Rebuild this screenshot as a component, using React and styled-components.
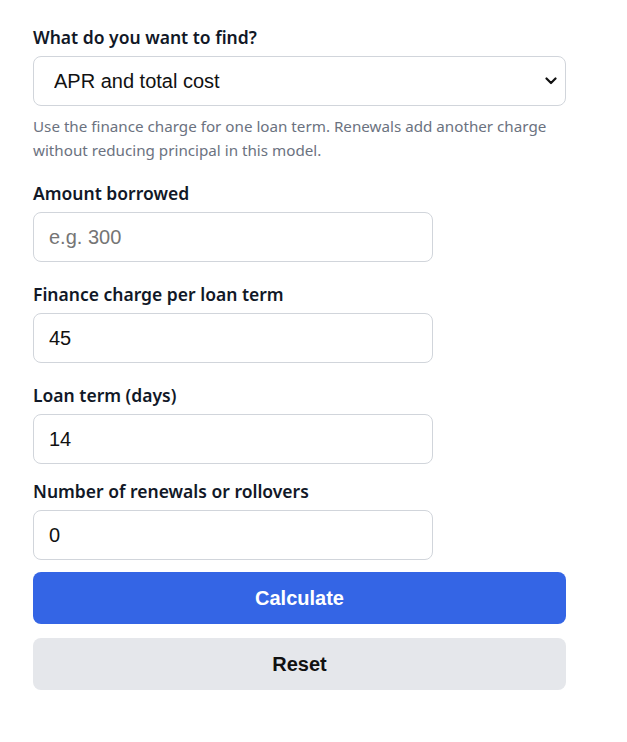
import React from 'react';
import styled, { createGlobalStyle } from 'styled-components';

const GlobalStyle = createGlobalStyle`
  body {
    margin: 0;
    background: #ffffff;
    font-family: "Noto Sans", "Open Sans", sans-serif;
    color: #111827;
  }
`;

const Form = styled.form`
  width: 533px;
  padding: 25px 0 0 33px;
  display: flex;
  flex-direction: column;
`;

const Field = styled.div`
  display: flex;
  flex-direction: column;
  margin-bottom: ${props => props.$gap || 20}px;
`;

const Label = styled.label`
  font-size: 17.5px;
  font-weight: 600;
  line-height: 24px;
  margin-bottom: 7px;
  color: #111827;
`;

const SelectWrap = styled.div`
  position: relative;
  width: 100%;
`;

const Select = styled.select`
  appearance: none;
  width: 100%;
  height: 50px;
  box-sizing: border-box;
  border: 1px solid #d1d5db;
  border-radius: 8px;
  background: #fff;
  padding: 0 40px 0 20px;
  font-family: "Liberation Sans", Arial, sans-serif;
  font-size: 20px;
  color: #111;
`;

const Chevron = styled.svg`
  position: absolute;
  right: 9px;
  top: 21px;
  pointer-events: none;
`;

const Help = styled.p`
  margin: 8px 0 0;
  font-size: 15.2px;
  line-height: 24px;
  color: #6b7280;
`;

const Input = styled.input`
  width: ${props => props.$width || 400}px;
  height: 50px;
  box-sizing: border-box;
  border: 1px solid #d1d5db;
  border-radius: 8px;
  padding: 0 15px;
  font-family: "Liberation Sans", Arial, sans-serif;
  font-size: 20px;
  color: #111;
  background: #fff;
  &::placeholder {
    color: #757575;
  }
`;

const Button = styled.button`
  width: 100%;
  height: 52px;
  border: none;
  border-radius: 8px;
  font-family: "Liberation Sans", Arial, sans-serif;
  font-size: 20px;
  font-weight: 700;
  cursor: pointer;
  background: ${props => (props.$kind === 'primary' ? '#3465e5' : '#e5e7eb')};
  color: ${props => (props.$kind === 'primary' ? '#ffffff' : '#111111')};
  margin-bottom: 14px;
`;

const App = () => {
  return (
    <>
      <GlobalStyle />
      <Form onSubmit={e => e.preventDefault()}>
        <Field $gap={19}>
          <Label>What do you want to find?</Label>
          <SelectWrap>
            <Select defaultValue="apr">
              <option value="apr">APR and total cost</option>
            </Select>
            <Chevron width="12" height="8" viewBox="0 0 12 8">
              <path d="M1.5 1.5 6 6l4.5-4.5" fill="none" stroke="#111" strokeWidth="2.2" strokeLinecap="round" strokeLinejoin="round" />
            </Chevron>
          </SelectWrap>
          <Help>
            Use the finance charge for one loan term. Renewals add another charge without reducing principal in this model.
          </Help>
        </Field>
        <Field>
          <Label>Amount borrowed</Label>
          <Input type="text" placeholder="e.g. 300" />
        </Field>
        <Field>
          <Label>Finance charge per loan term</Label>
          <Input type="text" defaultValue="45" />
        </Field>
        <Field $gap={15}>
          <Label>Loan term (days)</Label>
          <Input type="text" defaultValue="14" />
        </Field>
        <Field $gap={12}>
          <Label>Number of renewals or rollovers</Label>
          <Input type="text" defaultValue="0" />
        </Field>
        <Button type="submit" $kind="primary">Calculate</Button>
        <Button type="button">Reset</Button>
      </Form>
    </>
  );
};

export default App;
